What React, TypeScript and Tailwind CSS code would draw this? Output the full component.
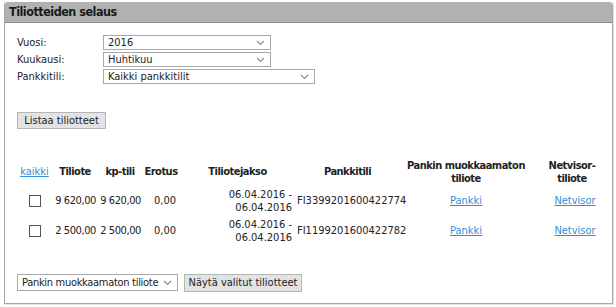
import React from "react";

function Chevron() {
    return (
        <svg width="9" height="6" viewBox="0 0 9 6" className="shrink-0">
            <path d="M1 1 L4.5 4.5 L8 1" fill="none" stroke="#8a8a8a" strokeWidth="1.1" />
        </svg>
    );
}

function Select({ value, w }: { value: string; w: string }) {
    return (
        <div className={`flex items-center justify-between border border-[#a9a9a9] bg-white pl-[4px] pr-[5px] ${w}`}>
            <span className="whitespace-nowrap leading-none">{value}</span>
            <Chevron />
        </div>
    );
}

const rows = [
    { tiliote: "9 620,00", kp: "9 620,00", erotus: "0,00", iban: "FI3399201600422774" },
    { tiliote: "2 500,00", kp: "2 500,00", erotus: "0,00", iban: "FI1199201600422782" },
];

export default function App() {
    return (
        <div className="h-[307px] w-[616px] bg-white pl-[4px] pt-[2px] font-['DejaVu_Sans_Condensed','DejaVu_Sans',sans-serif] font-stretch-condensed text-[11px] text-[#222]">
            <div className="flex h-[302px] w-[609px] flex-col rounded-t-[3px] border border-t-0 border-[#a8a8a8] shadow-[1px_1px_1px_rgba(0,0,0,0.12)]">
                <div className="flex h-[21px] shrink-0 items-center rounded-t-[3px] border-b border-[#8c8c8c] bg-[#b1b1b1] pl-[4px] text-[12.5px] font-bold tracking-[-0.5px] text-[#1a1a1a]">
                    Tiliotteiden selaus
                </div>
                <div className="flex flex-1 flex-col pl-[12px] pt-[12px]">
                    <div className="grid grid-cols-[86px_auto] gap-y-[2px] leading-[15px]">
                        <span>Vuosi:</span>
                        <Select value="2016" w="h-[15px] w-[168px]" />
                        <span>Kuukausi:</span>
                        <Select value="Huhtikuu" w="h-[15px] w-[168px]" />
                        <span>Pankkitili:</span>
                        <Select value="Kaikki pankkitilit" w="h-[15px] w-[212px]" />
                    </div>

                    <div className="mt-[28px]">
                        <button className="h-[17px] w-[89px] border border-[#b5b5b5] bg-[#e3e3e3] leading-none text-[#222]">
                            Listaa tiliotteet
                        </button>
                    </div>

                    <table className="mt-[28px] w-[595px] table-fixed border-collapse whitespace-nowrap leading-[13px]">
                        <colgroup>
                            <col className="w-[35px]" />
                            <col className="w-[46px]" />
                            <col className="w-[44px]" />
                            <col className="w-[38px]" />
                            <col className="w-[115px]" />
                            <col className="w-[105px]" />
                            <col className="w-[132px]" />
                            <col className="w-[80px]" />
                        </colgroup>
                        <thead>
                            <tr className="h-[28px] font-bold tracking-[-0.5px]">
                                <th className="p-0 text-center font-normal tracking-normal">
                                    <a className="text-[#2f8fd8] underline">kaikki</a>
                                </th>
                                <th className="p-0 text-center">Tiliote</th>
                                <th className="p-0 text-center">kp-tili</th>
                                <th className="p-0 text-center">Erotus</th>
                                <th className="p-0 text-center">Tiliotejakso</th>
                                <th className="p-0 text-center">Pankkitili</th>
                                <th className="p-0 text-center">Pankin muokkaamaton<br />tiliote</th>
                                <th className="p-0 text-center">Netvisor-<br />tiliote</th>
                            </tr>
                        </thead>
                        <tbody>
                            {rows.map((r) => (
                                <tr key={r.iban} className="h-[30px]">
                                    <td className="p-0 text-center">
                                        <span className="inline-block h-[12px] w-[12px] border border-[#555] bg-white align-middle" />
                                    </td>
                                    <td className="p-0 pr-[2px] text-right tracking-[-0.4px]">{r.tiliote}</td>
                                    <td className="p-0 pr-[1px] text-right tracking-[-0.4px]">{r.kp}</td>
                                    <td className="p-0 pr-[4px] text-right">{r.erotus}</td>
                                    <td className="p-0 pr-[3px] text-right">06.04.2016 -<br />06.04.2016</td>
                                    <td className="p-0 pl-[2px] text-left">{r.iban}</td>
                                    <td className="p-0 text-center"><a className="text-[#2f8fd8] underline">Pankki</a></td>
                                    <td className="p-0 pl-[6px] text-center"><a className="text-[#2f8fd8] underline">Netvisor</a></td>
                                </tr>
                            ))}
                        </tbody>
                    </table>

                    <div className="mt-[28px] flex items-center gap-[6px]">
                        <div className="flex h-[17px] w-[161px] items-center justify-between border border-[#a9a9a9] bg-white pl-[4px] pr-[5px]">
                            <span className="whitespace-nowrap leading-none tracking-[-0.3px]">Pankin muokkaamaton tiliote</span>
                            <Chevron />
                        </div>
                        <button className="h-[18px] w-[118px] border border-[#b5b5b5] bg-[#e3e3e3] leading-none text-[#222]">
                            Näytä valitut tiliotteet
                        </button>
                    </div>
                </div>
            </div>
        </div>
    );
}
